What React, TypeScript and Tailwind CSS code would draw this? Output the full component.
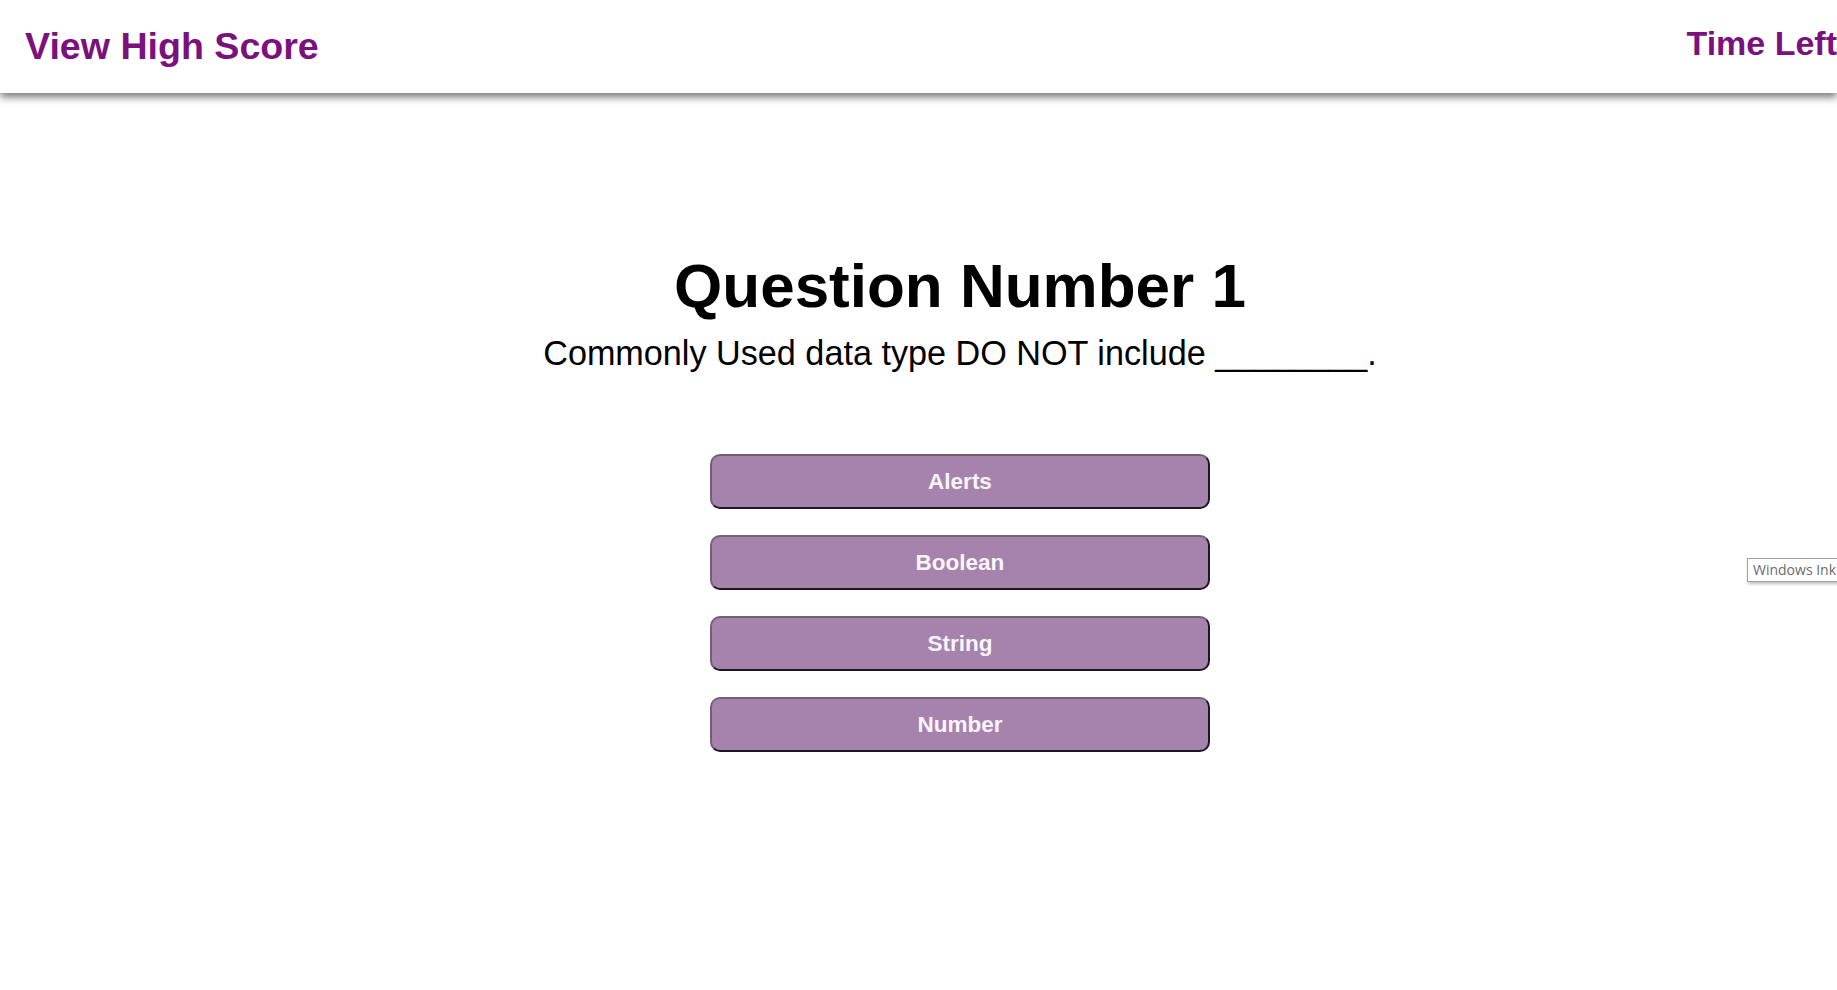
const answers = ["Alerts", "Boolean", "String", "Number"];

const App = () => {
  return (
    <div className="relative min-h-screen overflow-hidden bg-white font-['Liberation_Sans',Arial,sans-serif]">
      <header className="flex h-[93px] items-center justify-between pl-[25px] bg-white shadow-[0_4px_8px_rgba(0,0,0,0.55)]">
        <a className="text-[37.6px] font-bold leading-none text-[#7a117d] cursor-pointer">View High Score</a>
        <div className="mb-[7px] text-[34px] font-bold leading-none text-[#7a117d] whitespace-nowrap">Time Left</div>
      </header>

      {/* content is centred on a 1920px-wide page */}
      <main className="flex flex-col items-center pl-[83px]">
        <h1 className="mt-[162px] text-[62px] font-bold leading-none text-black">Question Number 1</h1>
        <p className="mt-[19px] text-[34.2px] leading-none text-black">
          Commonly Used data type DO NOT include ________.
        </p>

        <div className="mt-[84px] flex flex-col gap-[26px]">
          {answers.map((a) => (
            <button
              key={a}
              className="h-[55px] w-[500px] rounded-[10px] border-2 border-t-[#6f6272] border-l-[#6f6272] border-b-[#1d1820] border-r-[#1d1820] bg-[#a683ad] text-[22.5px] font-bold text-[#fbf5fb]"
            >
              {a}
            </button>
          ))}
        </div>
      </main>

      <div className="absolute left-[1747px] top-[558px] border border-[#a0a0a0] bg-white px-[5px] py-[2px] text-[14px] leading-[18px] text-[#6b6b6b] whitespace-nowrap shadow-[1px_2px_3px_rgba(0,0,0,0.25)] font-['Open_Sans',sans-serif]">
        Windows Ink
      </div>
    </div>
  );
};

export default App;
